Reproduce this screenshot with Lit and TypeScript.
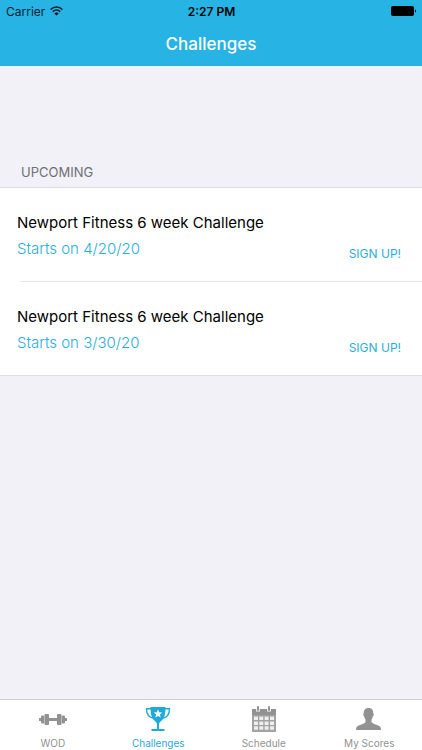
import { LitElement, html, css, svg } from "lit";
import { customElement, property, state } from "lit/decorators.js";
import { classMap } from "lit/directives/class-map.js";

interface Challenge {
  name: string;
  starts: string;
}

const challenges: Challenge[] = [
  { name: "Newport Fitness 6 week Challenge", starts: "4/20/20" },
  { name: "Newport Fitness 6 week Challenge", starts: "3/30/20" },
];

const calendarCells = [0, 1, 2].flatMap((row) =>
  [0, 1, 2, 3].map((col) => ({ x: 6 + col * 5, y: 11 + row * 5 }))
);

const icons = {
  wod: svg`
    <rect x="2" y="13" width="3" height="3"/>
    <rect x="4" y="10.500" width="3.200" height="8" rx="1"/>
    <rect x="7.500" y="9" width="4.500" height="11" rx="1"/>
    <rect x="11" y="13" width="10" height="3"/>
    <rect x="20" y="9" width="4.500" height="11" rx="1"/>
    <rect x="24.800" y="10.500" width="3.200" height="8" rx="1"/>
    <rect x="27" y="13" width="3" height="3"/>`,
  challenges: svg`
    <path fill="none" stroke="currentColor" stroke-width="1.400"
      d="M9.500 3.700H4.500c0 5 2 8.800 7.200 9.400M22.500 3.700h5c0 5-2 8.800-7.200 9.400"/>
    <path fill-rule="evenodd"
      d="M8.500 2h15c.1 7-1.200 11.600-4.300 14-1.500 1.200-2.200 2-2.200 3.600V24h5.500v2h-13v-2H15v-4.400c0-1.600-.7-2.400-2.200-3.600C9.700 13.600 8.400 9 8.500 2zM16 4.400l-1.200 2.900-3.100.2 2.400 2-.8 3.100 2.700-1.700 2.700 1.700-.8-3.100 2.400-2-3.100-.2z"/>`,
  schedule: svg`
    <rect x="9" y="1" width="2" height="5" rx="1"/>
    <rect x="20" y="1" width="2" height="5" rx="1"/>
    <path fill-rule="evenodd"
      d="M4 4h4.200v2.600h3.600V4h7.400v2.600h3.600V4H28v6H4z"/>
    <path opacity="0.85" fill-rule="evenodd"
      d="M4 10h24v17H4z
        M6 11.500v3.500h4v-3.500zM11.300 11.500v3.500h4v-3.500zM16.600 11.500v3.500h4v-3.500zM22 11.500v3.500h4v-3.500z
        M6 16.400v3.500h4v-3.500zM11.300 16.400v3.500h4v-3.500zM16.600 16.400v3.500h4v-3.500zM22 16.400v3.500h4v-3.500z
        M6 21.300v3.500h4v-3.500zM11.300 21.300v3.500h4v-3.500zM16.600 21.300v3.500h4v-3.500zM22 21.300v3.500h4v-3.500z"/>
    ${calendarCells.map((c) => svg`<rect x=${c.x} y=${c.y} width="5" height="4" opacity="0.15"/>`)}`,
  scores: svg`
    <path d="M15.500 3c3.300 0 5 2.200 4.700 5.300.8.2.7 2.600-.4 3.200-.3 1.500-.7 2.200-1.300 3v2.300c.3 1.500 2.500 2.200 5.500 3.200 3 1 4 2 4 5H3c0-3 1-4 4-5 3-1 5.200-1.700 5.500-3.200v-2.300c-.6-.8-1-1.500-1.300-3-1.100-.6-1.200-3-.4-3.200C10.500 5.200 12.200 3 15.500 3z"/>`,
};

type TabId = keyof typeof icons;

const tabs: { id: TabId; label: string }[] = [
  { id: "wod", label: "WOD" },
  { id: "challenges", label: "Challenges" },
  { id: "schedule", label: "Schedule" },
  { id: "scores", label: "My Scores" },
];

@customElement("status-bar")
class StatusBar extends LitElement {
  static styles = css`
    :host {
      display: grid;
      grid-template-columns: 1fr auto 1fr;
      align-items: center;
      height: 22px;
      padding: 0 5px 0 6px;
      color: #06202a;
      font-size: 12px;
    }
    .carrier { display: flex; align-items: center; gap: 5px; }
    .time { color: #000; font-weight: 600; }
    .battery { justify-self: end; }
    svg { display: block; }
  `;

  render() {
    return html`
      <span class="carrier">
        Carrier
        <svg width="13" height="10" viewBox="0 0 13 10" aria-hidden="true">
          <path fill="none" stroke="currentColor" stroke-width="1.600"
            d="M.6 3.500c3.400-3.300 8.400-3.300 11.800 0M2.800 5.700c2.200-2 5.200-2 7.400 0"/>
          <path d="M4.300 7.300c1.300-1.100 3.100-1.100 4.400 0L6.500 9.600z"/>
        </svg>
      </span>
      <span class="time">2:27 PM</span>
      <svg class="battery" width="26" height="10" viewBox="0 0 26 10" role="img" aria-label="Battery full">
        <rect width="23" height="10" rx="2"/>
        <path d="M24 3.500c1.500.3 1.500 2.700 0 3z"/>
      </svg>
    `;
  }
}

@customElement("challenge-row")
class ChallengeRow extends LitElement {
  @property({ attribute: false }) challenge!: Challenge;

  static styles = css`
    :host {
      display: flex;
      justify-content: space-between;
      align-items: flex-end;
      padding: 22px 21px 20px 17px;
    }
    .name, .starts { margin: 0; font-size: 15px; font-weight: 400; }
    .name { color: #000; line-height: 26px; }
    .starts { color: #2baedb; font-weight: 300; line-height: 25px; }
    .signup {
      border: 0;
      padding: 0;
      background: none;
      color: #2baedb;
      font: inherit;
      font-size: 12px;
      line-height: 14px;
      cursor: pointer;
    }
  `;

  render() {
    return html`
      <div>
        <h3 class="name">${this.challenge.name}</h3>
        <p class="starts">Starts on ${this.challenge.starts}</p>
      </div>
      <button class="signup">SIGN UP!</button>
    `;
  }
}

@customElement("tab-bar")
class TabBar extends LitElement {
  @state() private active: TabId = "challenges";

  static styles = css`
    :host {
      display: block;
      border-top: 1px solid #d0d0d4;
      background: #fff;
    }
    .tabs { display: grid; grid-template-columns: repeat(4, 1fr); }
    .tab {
      display: flex;
      flex-direction: column;
      align-items: center;
      gap: 3px;
      border: 0;
      padding: 5px 0 0;
      background: none;
      color: #929292;
      font: inherit;
      font-size: 10px;
      line-height: 14px;
      cursor: pointer;
    }
    .tab.active { color: #1fa9d8; }
    .icon { display: block; fill: currentColor; }
  `;

  render() {
    return html`
      <nav class="tabs">
        ${tabs.map(
          (tab) => html`
            <button
              class=${classMap({ tab: true, active: tab.id === this.active })}
              @click=${() => (this.active = tab.id)}
            >
              <svg class="icon" width="32" height="28" viewBox="0 0 32 28" aria-hidden="true">${icons[tab.id]}</svg>
              ${tab.label}
            </button>
          `
        )}
      </nav>
    `;
  }
}

@customElement("app-root")
class AppRoot extends LitElement {
  static styles = css`
    :host {
      display: flex;
      flex-direction: column;
      min-height: 100vh;
      background: #f1f1f7;
      font-family: Inter, "Liberation Sans", sans-serif;
    }
    .header { background: #28b3e5; }
    .title {
      margin: 0;
      color: #fff;
      font-size: 17px;
      font-weight: 500;
      line-height: 44px;
      text-align: center;
    }
    .main { flex: 1; }
    .section {
      margin: 0;
      padding: 98px 21px 7px;
      color: #6f6f74;
      font-size: 13px;
      font-weight: 400;
      line-height: 16px;
    }
    .list {
      margin: 0;
      padding: 0;
      list-style: none;
      background: #fff;
      border: solid #dddde1;
      border-width: 1px 0;
    }
    .item + .item::before {
      content: "";
      display: block;
      height: 1px;
      margin-left: 21px;
      background: #e3e3e6;
    }
  `;

  render() {
    return html`
      <header class="header">
        <status-bar></status-bar>
        <h1 class="title">Challenges</h1>
      </header>
      <main class="main">
        <h2 class="section">UPCOMING</h2>
        <ul class="list">
          ${challenges.map(
            (c) => html`<li class="item"><challenge-row .challenge=${c}></challenge-row></li>`
          )}
        </ul>
      </main>
      <tab-bar></tab-bar>
    `;
  }
}
